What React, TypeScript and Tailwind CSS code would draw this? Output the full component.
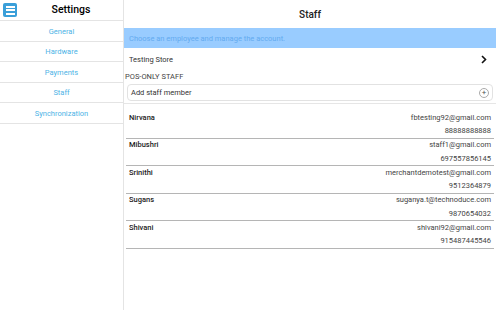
import React from 'react';

interface StaffMember {
  name: string;
  email: string;
  phone: string;
}

const staff: StaffMember[] = [
  { name: 'Nirvana', email: 'fbtesting92@gmail.com', phone: '88888888888' },
  { name: 'Mibushri', email: 'staff1@gmail.com', phone: '697557856145' },
  { name: 'Srinithi', email: 'merchantdemotest@gmail.com', phone: '9512364879' },
  { name: 'Sugans', email: 'suganya.t@technoduce.com', phone: '9870654032' },
  { name: 'Shivani', email: 'shivani92@gmail.com', phone: '915487445546' },
];

const menuItems = ['General', 'Hardware', 'Payments', 'Staff', 'Synchronization'];

const App: React.FC = () => {
  return (
    <div
      className="flex h-[310px] w-full bg-white text-[#222]"
      style={{ fontFamily: 'Roboto, "Liberation Sans", sans-serif' }}
    >
      {/* sidebar */}
      <div className="w-[124px] shrink-0 border-r border-[#e4e4e4]">
        <div className="flex h-[21px] items-center border-b border-[#e4e4e4] pl-[3px]">
          <div className="flex h-[14px] w-[14px] flex-col items-center justify-center gap-[1.5px] rounded-[2px] bg-[#3a9fd9]">
            <span className="h-[2px] w-[9px] bg-white" />
            <span className="h-[2px] w-[9px] bg-white" />
            <span className="h-[2px] w-[9px] bg-white" />
          </div>
          <div className="flex-1 pl-[2px] pt-[1px] text-center text-[10.5px] font-medium leading-none text-black">
            Settings
          </div>
        </div>
        {menuItems.map((item) => (
          <div
            key={item}
            className="flex h-[20.5px] items-center justify-center border-b border-[#e4e4e4] pt-[1px] text-[7.5px] text-[#4db3e6]"
          >
            {item}
          </div>
        ))}
      </div>

      {/* main */}
      <div className="flex-1">
        <div className="flex h-[28px] items-center justify-center pt-[1px] text-[10px] font-medium">
          Staff
        </div>
        <div className="flex h-[20px] items-center bg-[#99ccff] pl-[5px] pt-[1px] text-[7.5px] text-[#64abf0]">
          Choose an employee and manage the account.
        </div>
        <div className="flex h-[21px] items-center justify-between pl-[5px] pr-[9px] pt-[2px] text-[7.5px] text-[#333]">
          <span>Testing Store</span>
          <svg width="6" height="9" viewBox="0 0 6 9">
            <polyline points="1,1 4.5,4.5 1,8" fill="none" stroke="#111" strokeWidth="1.6" />
          </svg>
        </div>
        <div className="flex h-[14px] items-center pl-[1px] pt-[1px] text-[7.5px] text-[#444]">
          POS-ONLY STAFF
        </div>
        <div className="border-b border-[#e6e6e6] px-[3px] pb-[2px] pt-[1px]">
          <div className="flex h-[17px] items-center justify-between rounded-[4px] border border-[#e2e2e2] pl-[3px] pr-[3px] text-[7.5px] text-[#333]">
            <span className="pt-[1px]">Add staff member</span>
            <span className="flex h-[10px] w-[10px] items-center justify-center rounded-full border border-[#aaa] text-[8px] leading-none text-[#555]">
              +
            </span>
          </div>
        </div>
        <div className="px-[2px] pt-[7px]">
          {staff.map((s) => (
            <div
              key={s.name}
              className="flex h-[27.5px] justify-between border-b border-[#b5b5b5] pl-[3px] pr-[3px] pt-[1.5px] text-[7.5px]"
            >
              <div className="h-[9px] font-medium leading-[9px] text-[#222]">{s.name}</div>
              <div className="text-right leading-[9px] text-[#444]">
                <div className="h-[9px]">{s.email}</div>
                <div className="mt-[4.5px] h-[9px]">{s.phone}</div>
              </div>
            </div>
          ))}
        </div>
      </div>
    </div>
  );
};

export default App;
